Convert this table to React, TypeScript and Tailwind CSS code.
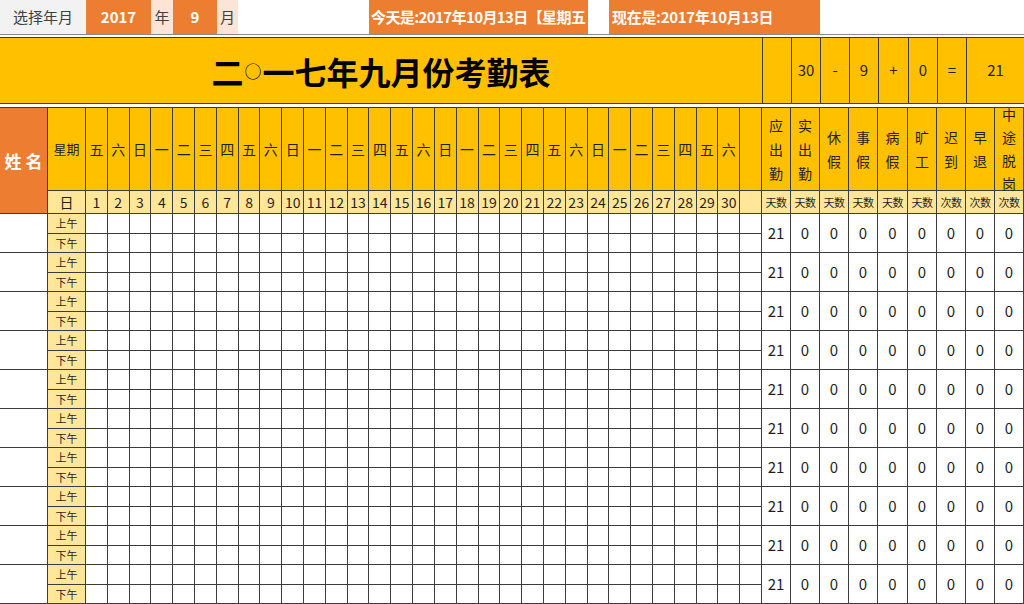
import React from 'react';

const FONT = { fontFamily: '"Noto Sans CJK SC", "Noto Sans", sans-serif' };

const WEEK = ['五', '六', '日', '一', '二', '三', '四'];
const DAYS = Array.from({ length: 31 }, (_, i) => (i < 30 ? { d: i + 1, w: WEEK[i % 7] } : null));

const SUMMARY = [
  { label: ['应', '出', '勤'], unit: '天数' },
  { label: ['实', '出', '勤'], unit: '天数' },
  { label: ['休', '假'], unit: '天数' },
  { label: ['事', '假'], unit: '天数' },
  { label: ['病', '假'], unit: '天数' },
  { label: ['旷', '工'], unit: '天数' },
  { label: ['迟', '到'], unit: '次数' },
  { label: ['早', '退'], unit: '次数' },
  { label: ['中', '途', '脱', '岗'], unit: '次数' },
];

const COLS =
  'grid grid-cols-[48px_38px_repeat(31,minmax(0,1fr))_29px_29px_29px_29px_30px_29px_29px_29px_29px]';
const CELL = 'border-r border-b border-[#3c3c3c] flex items-center justify-center';

function TopBar() {
  return (
    <div className="flex h-[34px] text-[15px] border-b border-[#8a8a8a] box-content">
      <div className="w-[86px] bg-[#f2f2f2] text-[#404040] flex items-center justify-center">选择年月</div>
      <div className="w-[65px] bg-[#ed7d31] text-white font-bold flex items-center justify-center">2017</div>
      <div className="w-[22px] bg-[#fce4d6] text-[#404040] flex items-center justify-center">年</div>
      <div className="w-[44px] bg-[#ed7d31] text-white font-bold flex items-center justify-center">9</div>
      <div className="w-[21px] bg-[#fce4d6] text-[#404040] flex items-center justify-center">月</div>
      <div className="w-[131px]" />
      <div className="w-[219px] bg-[#ed7d31] text-white font-bold text-[15px] tracking-[-0.6px] flex items-center pl-[2px] whitespace-nowrap">
        今天是:2017年10月13日【星期五
      </div>
      <div className="w-[21px]" />
      <div className="w-[211px] bg-[#ed7d31] text-white font-bold text-[15px] tracking-[-0.3px] flex items-center pl-[3px] whitespace-nowrap">
        现在是:2017年10月13日
      </div>
    </div>
  );
}

function TitleRow() {
  const parts = ['', '30', '-', '9', '+', '0', '='];
  return (
    <div className={`${COLS} mt-[2px] h-[67px] bg-[#ffc000] border-y border-[#3c3c3c] text-[#1f1f1f]`}>
      <div className="[grid-column:span_33/span_33] flex items-center justify-center text-[32px] font-bold text-black">
        二<span className="text-[17px] font-normal px-[1px]">○</span>一七年九月份考勤表
      </div>
      {parts.map((p, i) => (
        <div key={i} className="border-l border-[#3c3c3c] flex items-center justify-center text-[15px]">
          {p}
        </div>
      ))}
      <div className="col-span-2 border-l border-[#3c3c3c] flex items-center justify-center text-[15px]">21</div>
    </div>
  );
}

function Sheet() {
  const groups = Array.from({ length: 10 });
  return (
    <div
      className={`${COLS} grid-rows-[83px_23px_repeat(20,19.5px)] mt-[3px] border-t border-[#3c3c3c] text-[#1f1f1f]`}
    >
      {/* header row 1 */}
      <div className={`${CELL} row-span-2 bg-[#ed7d31] text-white font-bold text-[17px] whitespace-nowrap`}>
        姓 名
      </div>
      <div className={`${CELL} bg-[#ffc000] text-[13px]`}>星期</div>
      {DAYS.map((d, i) => (
        <div key={'w' + i} className={`${CELL} bg-[#ffc000] text-[14px]`}>
          {d ? d.w : ''}
        </div>
      ))}
      {SUMMARY.map((s, i) => (
        <div
          key={'s' + i}
          className={`${CELL} flex-col bg-[#ffc000] text-[14px] ${s.label.length > 3 ? 'leading-[23px]' : 'leading-[24px]'}`}
        >
          {s.label.map((c, j) => (
            <span key={j}>{c}</span>
          ))}
        </div>
      ))}

      {/* header row 2 */}
      <div className={`${CELL} bg-[#ffe699] text-[14px]`}>日</div>
      {DAYS.map((d, i) => (
        <div key={'d' + i} className={`${CELL} bg-[#ffe699] text-[14px]`}>
          {d ? d.d : ''}
        </div>
      ))}
      {SUMMARY.map((s, i) => (
        <div key={'u' + i} className={`${CELL} bg-[#ffe699] text-[11px] tracking-[-0.5px]`}>
          {s.unit}
        </div>
      ))}

      {/* data rows */}
      {groups.map((_, g) => (
        <React.Fragment key={g}>
          <div className={`${CELL} row-span-2 bg-white`} />
          <div className={`${CELL} bg-[#ffe699] text-[11px]`}>上午</div>
          {DAYS.map((_, i) => (
            <div key={'a' + i} className={`${CELL} bg-white`} />
          ))}
          {SUMMARY.map((_, i) => (
            <div key={'v' + i} className={`${CELL} row-span-2 bg-white text-[15px]`}>
              {i === 0 ? '21' : '0'}
            </div>
          ))}
          <div className={`${CELL} bg-[#ffe699] text-[11px]`}>下午</div>
          {DAYS.map((_, i) => (
            <div key={'p' + i} className={`${CELL} bg-white`} />
          ))}
        </React.Fragment>
      ))}
    </div>
  );
}

export default function App() {
  return (
    <div className="w-[1024px] h-[604px] overflow-hidden bg-white" style={FONT}>
      <TopBar />
      <TitleRow />
      <Sheet />
    </div>
  );
}
